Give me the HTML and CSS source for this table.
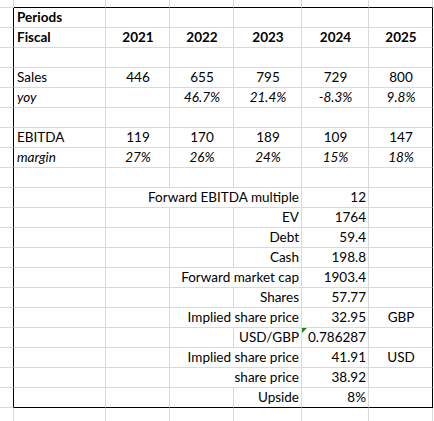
FILE: index.html
```html
<!DOCTYPE html>
<html>
<head>
<meta charset="utf-8">
<link rel="stylesheet" href="styles.css">
</head>
<body>
<div class="sheet">
  <div class="r top"><div class="c"></div><div class="c in"></div><div class="c in"></div><div class="c in"></div><div class="c in"></div><div class="c in"></div><div class="c in"></div><div class="c"></div></div>

  <div class="r"><div class="c lb"></div><div class="c b">Periods</div><div class="c"></div><div class="c"></div><div class="c"></div><div class="c"></div><div class="c rb"></div><div class="c"></div></div>
  <div class="r"><div class="c lb"></div><div class="c b">Fiscal</div><div class="c b ctr">2021</div><div class="c b ctr">2022</div><div class="c b ctr">2023</div><div class="c b ctr">2024</div><div class="c b ctr rb">2025</div><div class="c"></div></div>
  <div class="r"><div class="c lb"></div><div class="c"></div><div class="c"></div><div class="c"></div><div class="c"></div><div class="c"></div><div class="c rb"></div><div class="c"></div></div>
  <div class="r"><div class="c lb"></div><div class="c">Sales</div><div class="c ctr">446</div><div class="c ctr">655</div><div class="c ctr">795</div><div class="c ctr">729</div><div class="c ctr rb">800</div><div class="c"></div></div>
  <div class="r"><div class="c lb"></div><div class="c i">yoy</div><div class="c"></div><div class="c i ctr">46.7%</div><div class="c i ctr">21.4%</div><div class="c i ctr">-8.3%</div><div class="c i ctr rb">9.8%</div><div class="c"></div></div>
  <div class="r"><div class="c lb"></div><div class="c"></div><div class="c"></div><div class="c"></div><div class="c"></div><div class="c"></div><div class="c rb"></div><div class="c"></div></div>
  <div class="r"><div class="c lb"></div><div class="c">EBITDA</div><div class="c ctr">119</div><div class="c ctr">170</div><div class="c ctr">189</div><div class="c ctr">109</div><div class="c ctr rb">147</div><div class="c"></div></div>
  <div class="r"><div class="c lb"></div><div class="c i">margin</div><div class="c i ctr">27%</div><div class="c i ctr">26%</div><div class="c i ctr">24%</div><div class="c i ctr">15%</div><div class="c i ctr rb">18%</div><div class="c"></div></div>
  <div class="r"><div class="c lb"></div><div class="c"></div><div class="c"></div><div class="c"></div><div class="c"></div><div class="c"></div><div class="c rb"></div><div class="c"></div></div>

  <div class="r"><div class="c lb"></div><div class="c"></div><div class="c rt span3">Forward EBITDA multiple</div><div class="c rt">12</div><div class="c rb"></div><div class="c"></div></div>
  <div class="r"><div class="c lb"></div><div class="c"></div><div class="c"></div><div class="c"></div><div class="c rt">EV</div><div class="c rt">1764</div><div class="c rb"></div><div class="c"></div></div>
  <div class="r"><div class="c lb"></div><div class="c"></div><div class="c"></div><div class="c"></div><div class="c rt">Debt</div><div class="c rt">59.4</div><div class="c rb"></div><div class="c"></div></div>
  <div class="r"><div class="c lb"></div><div class="c"></div><div class="c"></div><div class="c"></div><div class="c rt">Cash</div><div class="c rt">198.8</div><div class="c rb"></div><div class="c"></div></div>
  <div class="r"><div class="c lb"></div><div class="c"></div><div class="c"></div><div class="c rt span2">Forward market cap</div><div class="c rt">1903.4</div><div class="c rb"></div><div class="c"></div></div>
  <div class="r"><div class="c lb"></div><div class="c"></div><div class="c"></div><div class="c"></div><div class="c rt">Shares</div><div class="c rt">57.77</div><div class="c rb"></div><div class="c"></div></div>
  <div class="r"><div class="c lb"></div><div class="c"></div><div class="c"></div><div class="c rt span2">Implied share price</div><div class="c rt">32.95</div><div class="c ctr rb">GBP</div><div class="c"></div></div>
  <div class="r"><div class="c lb"></div><div class="c"></div><div class="c"></div><div class="c"></div><div class="c rt">USD/GBP</div><div class="c rt flag">0.786287</div><div class="c rb"></div><div class="c"></div></div>
  <div class="r"><div class="c lb"></div><div class="c"></div><div class="c"></div><div class="c rt span2">Implied share price</div><div class="c rt">41.91</div><div class="c ctr rb">USD</div><div class="c"></div></div>
  <div class="r"><div class="c lb"></div><div class="c"></div><div class="c"></div><div class="c rt span2">share price</div><div class="c rt">38.92</div><div class="c rb"></div><div class="c"></div></div>
  <div class="r last"><div class="c lb"></div><div class="c in"></div><div class="c in"></div><div class="c in"></div><div class="c rt in">Upside</div><div class="c rt in">8%</div><div class="c rb in"></div><div class="c"></div></div>

  <div class="r tail"><div class="c"></div><div class="c"></div><div class="c"></div><div class="c"></div><div class="c"></div><div class="c"></div><div class="c"></div><div class="c"></div></div>
</div>
</body>
</html>
```

FILE: styles.css
```css
html, body {
  margin: 0;
  padding: 0;
  background: #fff;
}

.sheet {
  width: 434px;
  height: 421px;
  overflow: hidden;
  font-family: Lato, "Open Sans", sans-serif;
  font-size: 13.5px;
  color: #000;
}

.r {
  display: grid;
  grid-template-columns: 14px 92px 64px 64px 68px 67px 64px 1fr;
  height: 20px;
}

.r.top {
  height: 8px;
}

.r.tail {
  height: 20px;
}

.c {
  box-sizing: border-box;
  border-right: 1px solid #d9d9d9;
  border-bottom: 1px solid #d9d9d9;
  padding: 0 2px 2px 3px;
  display: flex;
  align-items: flex-end;
  justify-content: flex-start;
  white-space: nowrap;
  line-height: 16px;
  position: relative;
}

.top .in,
.last .in {
  border-bottom-color: #000;
}

.lb {
  border-right-color: #000;
}

.rb {
  border-right-color: #000;
}

.b {
  font-weight: bold;
}

.i {
  font-style: italic;
}

.ctr {
  justify-content: center;
}

.rt {
  justify-content: flex-end;
}

.span3 {
  grid-column: span 3;
}

.span2 {
  grid-column: span 2;
}

.flag::before {
  content: "";
  position: absolute;
  left: 0;
  top: 0;
  width: 0;
  height: 0;
  border-top: 5px solid #1a8a1a;
  border-right: 5px solid transparent;
}
```
